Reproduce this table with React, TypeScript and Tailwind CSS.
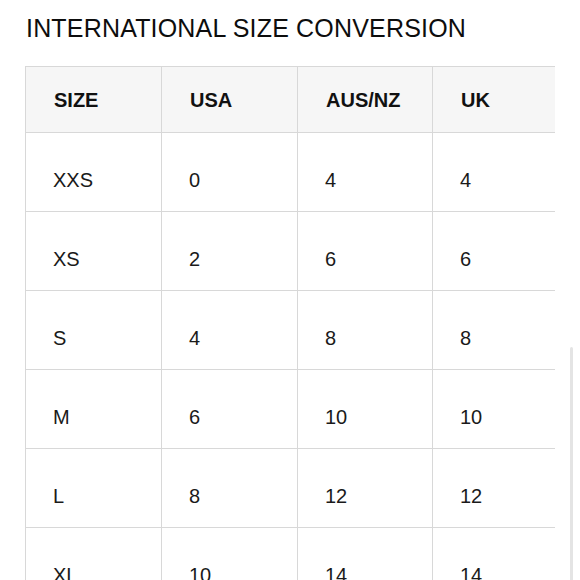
import React from "react";

const rows: string[][] = [
  ["XXS", "0", "4", "4"],
  ["XS", "2", "6", "6"],
  ["S", "4", "8", "8"],
  ["M", "6", "10", "10"],
  ["L", "8", "12", "12"],
  ["XL", "10", "14", "14"],
];

const widths = ["w-[136px]", "w-[136px]", "w-[135px]", "w-[123px]"];

export default function App() {
  return (
    <div
      className="relative w-[580px] h-[580px] overflow-hidden bg-white"
      style={{ fontFamily: '"Liberation Sans", Arial, sans-serif' }}
    >
      <div className="pl-[26px] pt-[13px]">
        <h1 className="text-[25px] leading-[30px] font-normal tracking-[0.18px] text-[#0d0d0d]">
          INTERNATIONAL SIZE CONVERSION
        </h1>
      </div>
      <div className="ml-[25px] mt-[23px] w-[530px]">
        <div className="flex border-t border-b border-[#d8d8d8] bg-[#f6f6f6] h-[67px]">
          {["SIZE", "USA", "AUS/NZ", "UK"].map((h, i) => (
            <div
              key={h}
              className={`${widths[i]} shrink-0 border-l border-[#d8d8d8] pl-[28px] pt-[21px] text-[20px] leading-[24px] font-bold text-[#111]`}
            >
              {h}
            </div>
          ))}
        </div>
        {rows.map((r, ri) => (
          <div key={ri} className="flex border-b border-[#d8d8d8] h-[79px]">
            {r.map((c, i) => (
              <div
                key={i}
                className={`${widths[i]} shrink-0 border-l border-[#d8d8d8] pl-[27px] pt-[35px] text-[20px] leading-[24px] text-[#1a1a1a]`}
              >
                {c}
              </div>
            ))}
          </div>
        ))}
      </div>
      <div className="absolute left-[570px] top-[347px] w-[3px] h-[240px] rounded-full bg-[#e4e4e4]" />
    </div>
  );
}
